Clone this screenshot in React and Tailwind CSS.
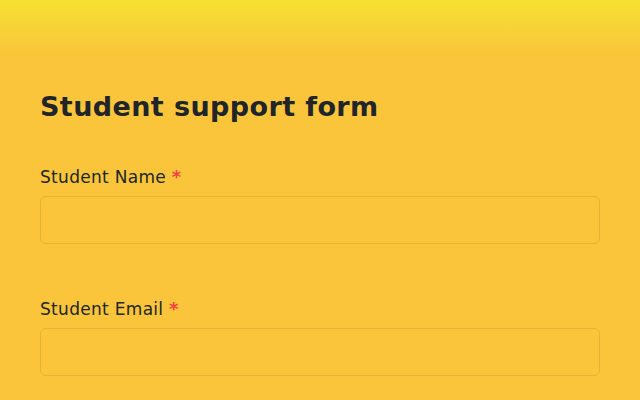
export default function App() {
  return (
    <div className="min-h-[400px] w-full bg-[#fac53b] bg-[linear-gradient(to_bottom,#f6e133_0px,#fac53b_56px)] px-10 pt-[88px] font-['DejaVu_Sans',sans-serif] text-[#212529]">
      <h1 className="text-[27px] leading-[38px] font-bold tracking-[0.4px]">Student support form</h1>

      <form className="mt-[40px] flex flex-col">
        <Field label="Student Name" />
        <div className="h-[54px]" />
        <Field label="Student Email" type="email" />
      </form>
    </div>
  );
}

function Field({ label, type = 'text' }) {
  return (
    <label className="flex flex-col">
      <span className="text-[17px] leading-[22px] font-normal tracking-[0.3px]">
        {label} <span className="text-[18px] font-bold text-[#ef4444]">*</span>
      </span>
      <input
        type={type}
        className="mt-[8px] h-[48px] w-full rounded-[6px] border border-[#e2b43a] bg-transparent px-3 outline-none"
      />
    </label>
  );
}
